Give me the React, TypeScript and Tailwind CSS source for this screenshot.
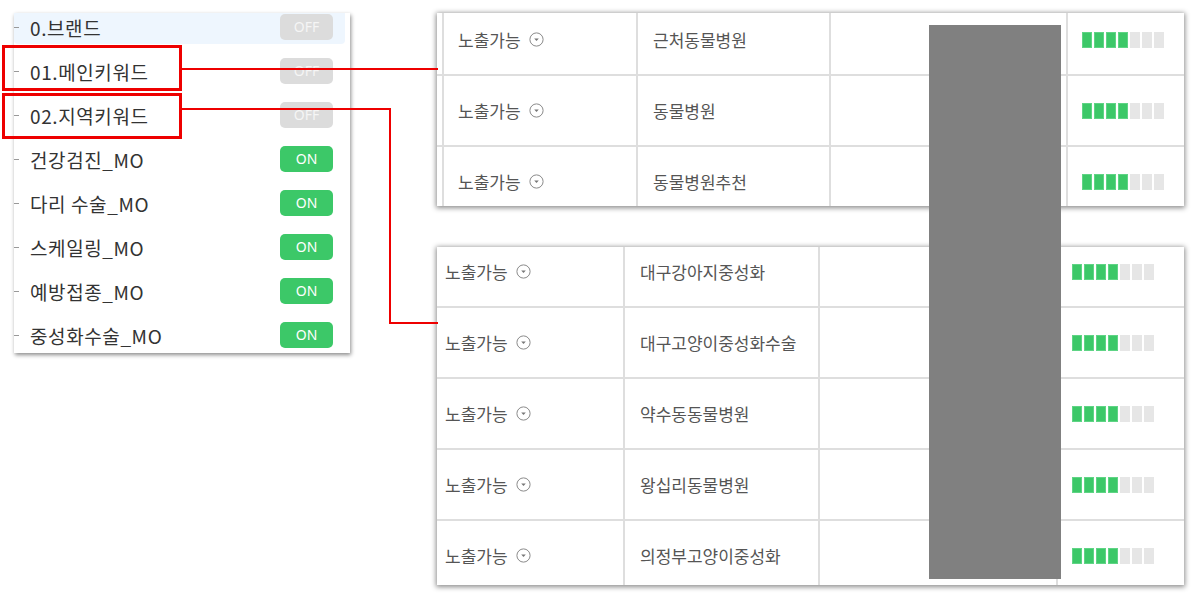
import type { ReactNode } from 'react'

const font = { fontFamily: '"Noto Sans CJK KR", "Noto Sans", sans-serif' }

const groups = [
  { label: '0.브랜드', on: false, active: true },
  { label: '01.메인키워드', on: false },
  { label: '02.지역키워드', on: false },
  { label: '건강검진_MO', on: true },
  { label: '다리 수술_MO', on: true },
  { label: '스케일링_MO', on: true },
  { label: '예방접종_MO', on: true },
  { label: '중성화수술_MO', on: true },
]

const topRows = ['근처동물병원', '동물병원', '동물병원추천']
const bottomRows = ['대구강아지중성화', '대구고양이중성화수술', '약수동동물병원', '왕십리동물병원', '의정부고양이중성화']

export default function App() {
  return (
    <div className="relative h-[599px] w-[1202px] overflow-hidden bg-white" style={font}>
      <GroupPanel />

      <TablePanel className="left-[437px] top-[13px] h-[193px]" offset="-mt-[8px]" cols={['w-[7px]', 'w-[194px]', 'w-[193px]', 'w-[237px]']} rows={topRows} leftRule />
      <TablePanel className="left-[437px] top-[247px] h-[338px]" offset="-mt-[10px]" cols={['w-0', 'w-[188px]', 'w-[195px]', 'w-[238px]']} rows={bottomRows} />

      {/* redaction */}
      <div className="absolute left-[929px] top-[25px] h-[554px] w-[132px] bg-[#808080]" />

      {/* annotations */}
      <svg className="absolute left-0 top-0" width="1202" height="599" fill="none">
        <rect x="3.5" y="46.5" width="177" height="43" stroke="#ee0000" strokeWidth="3" />
        <rect x="3.5" y="94.5" width="177" height="43" stroke="#ee0000" strokeWidth="3" />
        <path d="M182 69H438" stroke="#ee0000" strokeWidth="2" />
        <path d="M182 109H390V323H438" stroke="#ee0000" strokeWidth="2" />
      </svg>
    </div>
  )
}

function GroupPanel() {
  return (
    <div className="absolute left-[14px] top-[13px] h-[340px] w-[336px] overflow-hidden bg-white shadow-[1px_2px_4px_rgba(0,0,0,0.45)]">
      <div className="-mt-[8px] flex flex-col">
        {groups.map((g) => (
          <div key={g.label} className="flex h-[44px] items-center">
            <div
              className={`flex h-[34px] flex-1 items-center ${g.active ? 'mr-[5px] rounded-sm bg-[#eef6fe]' : 'mr-[5px]'}`}
            >
              <span className="h-px w-[5px] bg-[#999]" />
              <span className="ml-[11px] flex-1 text-[19px] leading-none tracking-[0.6px] text-[#333]">{g.label}</span>
              <Toggle on={g.on} />
            </div>
          </div>
        ))}
      </div>
    </div>
  )
}

function Toggle({ on }: { on: boolean }) {
  return (
    <span
      className={`mr-[12px] flex h-[26px] w-[53px] items-center justify-center rounded-[5px] text-[14px] leading-none ${
        on ? 'bg-[#3cc868] text-white' : 'bg-[#dcdcdc] text-[#f5f5f5]'
      }`}
      style={{ fontFamily: '"Noto Sans", sans-serif' }}
    >
      {on ? 'ON' : 'OFF'}
    </span>
  )
}

function TablePanel({
  className,
  offset,
  cols,
  rows,
  leftRule,
}: {
  className: string
  offset: string
  cols: string[]
  rows: string[]
  leftRule?: boolean
}) {
  return (
    <div
      className={`absolute w-[747px] overflow-hidden bg-white shadow-[0_1px_5px_1px_rgba(0,0,0,0.45)] ${className}`}
    >
      <div className={`flex flex-col ${offset}`}>
        {rows.map((name) => (
          <div key={name} className="flex h-[71px] border-b-2 border-[#dedede]">
            <div className={`shrink-0 ${cols[0]} ${leftRule ? 'border-r-2 border-[#dedede]' : ''}`} />
            <Cell width={cols[1]} pad={leftRule ? 'pl-[14px]' : 'pl-[8px]'}>
              <span>노출가능</span>
              <DropIcon />
            </Cell>
            <Cell width={cols[2]} pad="pl-[15px]">
              <span>{name}</span>
            </Cell>
            <Cell width={cols[3]} pad="" />
            <div className="flex flex-1 items-center pl-[14px]">
              <Signal />
            </div>
          </div>
        ))}
      </div>
    </div>
  )
}

function Cell({ width, pad, children }: { width: string; pad: string; children?: ReactNode }) {
  return (
    <div
      className={`flex shrink-0 items-center gap-[8px] border-r-2 border-[#dedede] text-[17px] leading-none text-[#555] ${width} ${pad}`}
    >
      {children}
    </div>
  )
}

function DropIcon() {
  return (
    <svg width="15" height="15" viewBox="0 0 15 15" fill="none">
      <circle cx="7.5" cy="7.5" r="6.6" stroke="#8a8a8a" strokeWidth="1" />
      <path d="M5.2 6.4H9.8L7.5 8.9Z" fill="#777" />
    </svg>
  )
}

function Signal() {
  return (
    <div className="flex gap-[2px]">
      {[0, 1, 2, 3, 4, 5, 6].map((i) => (
        <span
          key={i}
          className={`h-[16px] w-[10px] ${i < 4 ? 'border border-[#5fd485] bg-[#3cc868]' : 'bg-[#e6e6e6]'}`}
        />
      ))}
    </div>
  )
}
